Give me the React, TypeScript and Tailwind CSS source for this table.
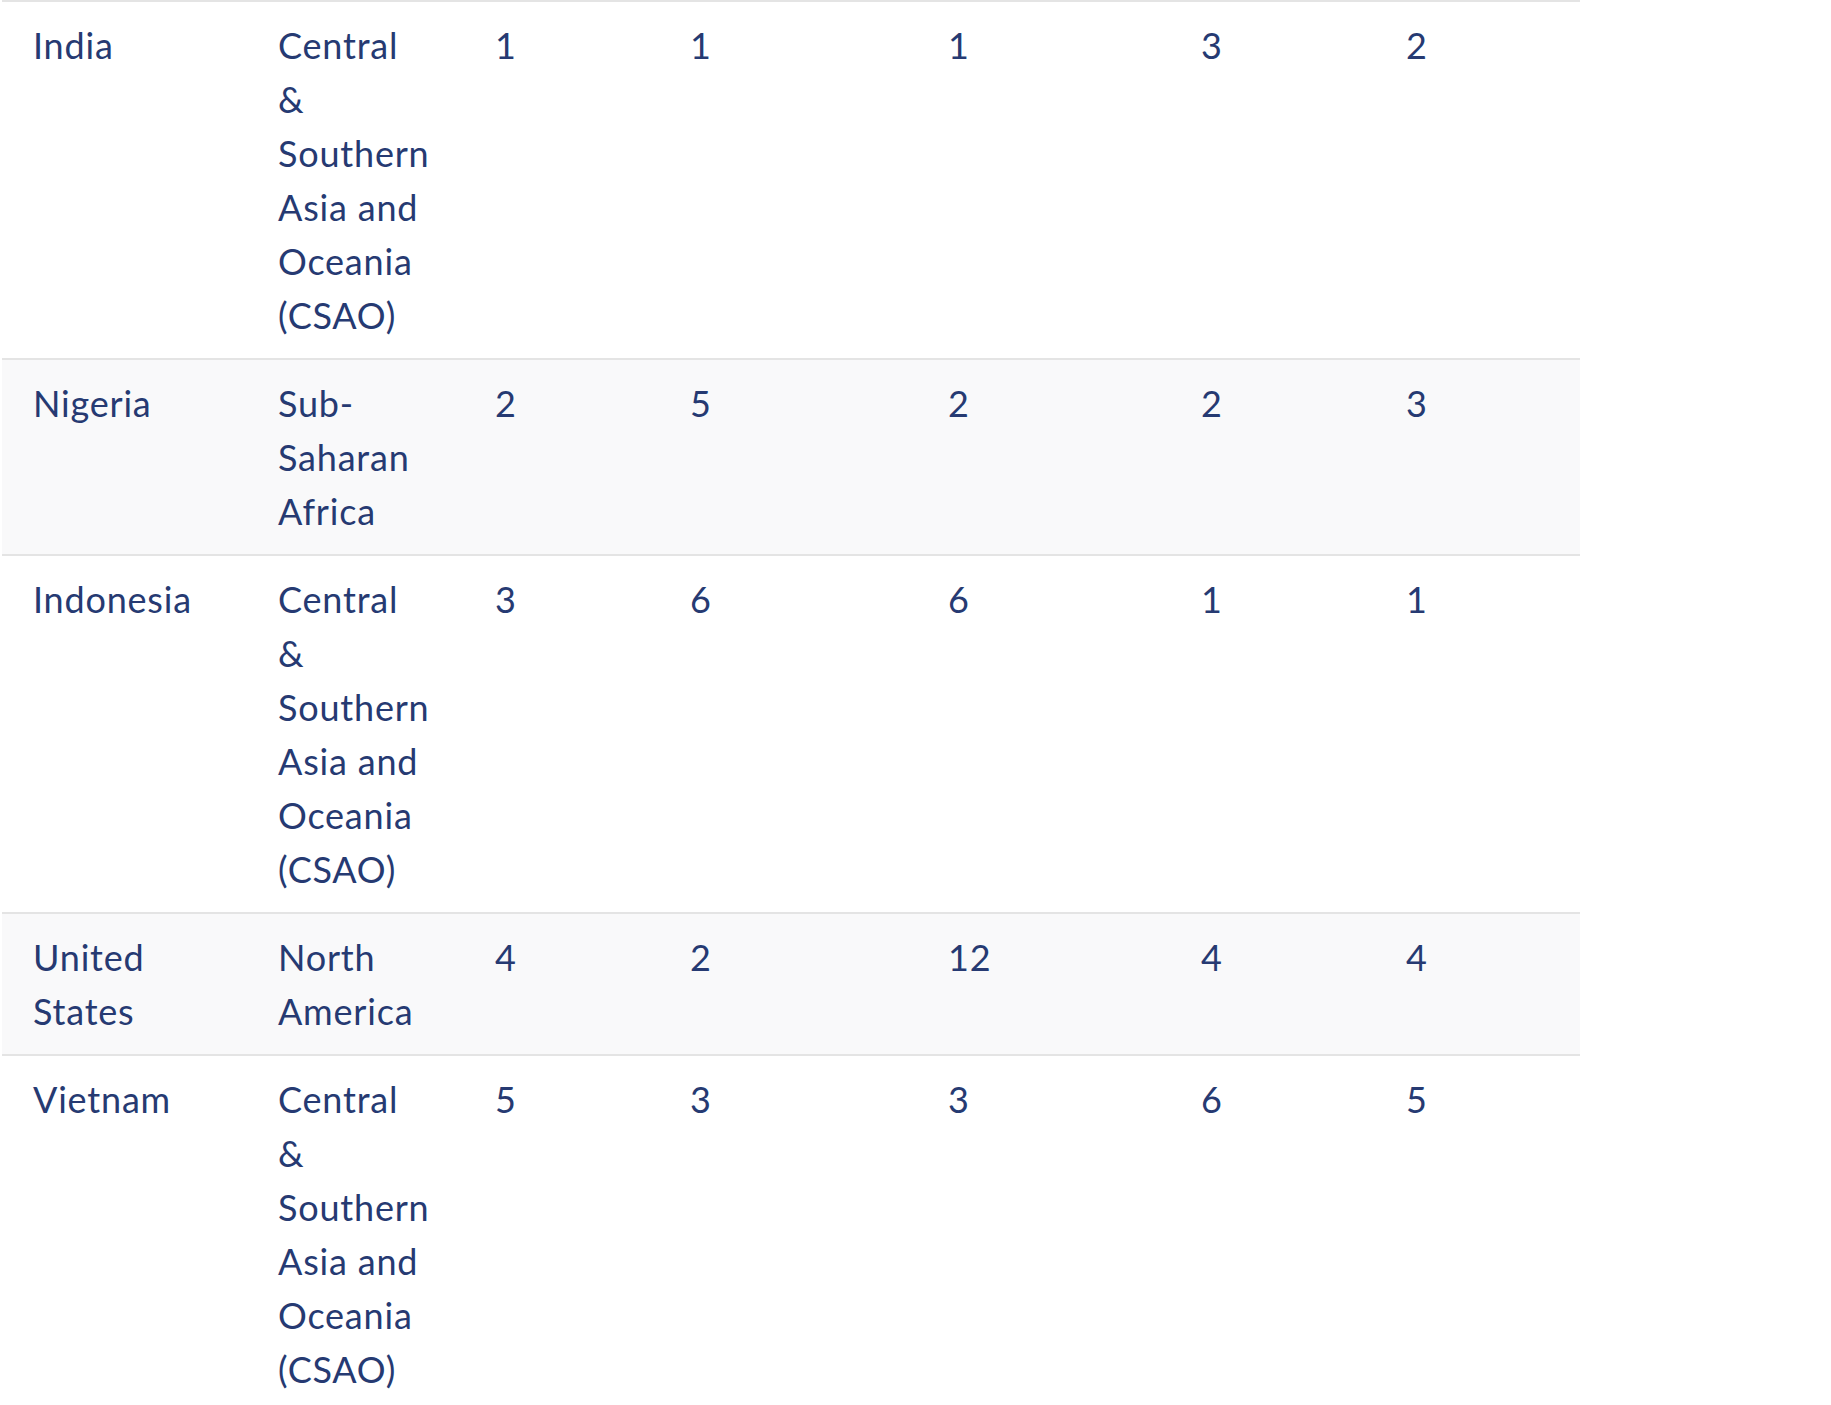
const rows = [
  { country: ["India"], region: ["Central", "&", "Southern", "Asia and", "Oceania", "(CSAO)"], ranks: ["1", "1", "1", "3", "2"] },
  { country: ["Nigeria"], region: ["Sub-", "Saharan", "Africa"], ranks: ["2", "5", "2", "2", "3"] },
  { country: ["Indonesia"], region: ["Central", "&", "Southern", "Asia and", "Oceania", "(CSAO)"], ranks: ["3", "6", "6", "1", "1"] },
  { country: ["United", "States"], region: ["North", "America"], ranks: ["4", "2", "12", "4", "4"] },
  { country: ["Vietnam"], region: ["Central", "&", "Southern", "Asia and", "Oceania", "(CSAO)"], ranks: ["5", "3", "3", "6", "5"] },
]

function Lines({ lines }: { lines: string[] }) {
  return (
    <>
      {lines.map((l, i) => (
        <span key={i} className="block whitespace-nowrap">
          {l}
        </span>
      ))}
    </>
  )
}

export default function App() {
  return (
    <div className="min-h-screen bg-white font-['Lato','Noto_Sans',sans-serif] text-[36px] leading-[54px] tracking-[0.8px] text-[#263a72]">
      <table className="ml-[2px] w-[1578px] table-fixed border-collapse">
        <colgroup>
          <col className="w-[245px]" />
          <col className="w-[217px]" />
          <col className="w-[195px]" />
          <col className="w-[258px]" />
          <col className="w-[253px]" />
          <col className="w-[205px]" />
          <col className="w-[205px]" />
        </colgroup>
        <tbody>
          {rows.map((row, i) => (
            <tr
              key={row.country.join(" ")}
              className={
                i % 2 === 1
                  ? "border-t-2 border-[#e4e4e4] bg-[#f9f9fa]"
                  : "border-t-2 border-[#e4e4e4] bg-white"
              }
            >
              <td className="py-4 pl-[31px] align-top">
                <Lines lines={row.country} />
              </td>
              <td className="py-4 pl-[31px] align-top">
                <Lines lines={row.region} />
              </td>
              {row.ranks.map((r, j) => (
                <td key={j} className="py-4 pl-[31px] align-top">
                  {r}
                </td>
              ))}
            </tr>
          ))}
        </tbody>
      </table>
    </div>
  )
}
